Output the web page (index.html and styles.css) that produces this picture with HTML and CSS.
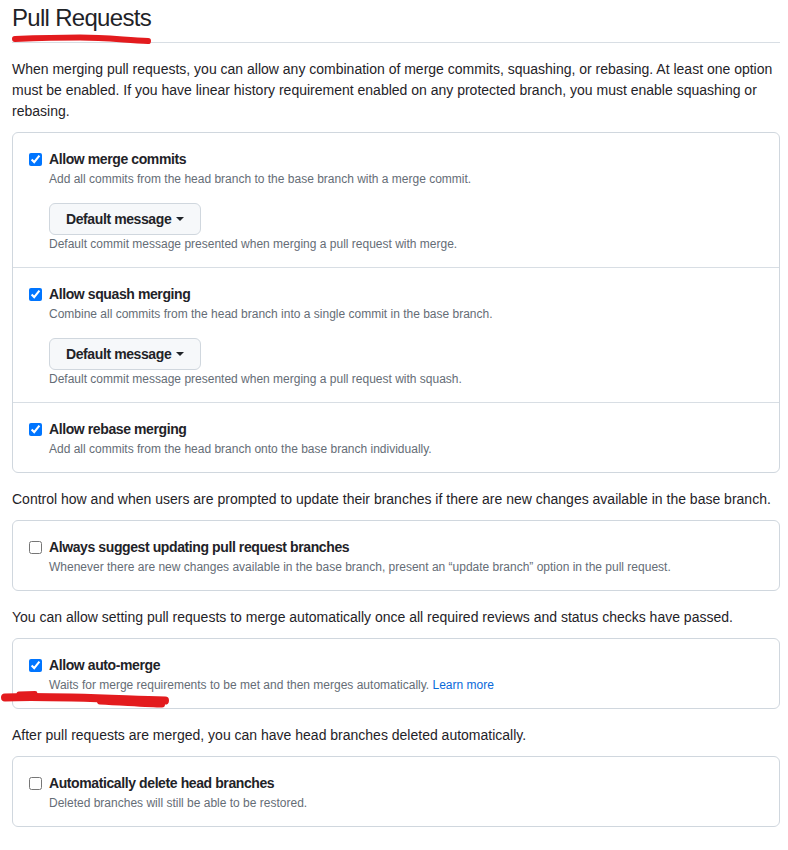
FILE: index.html
```html
<!DOCTYPE html>
<html lang="en">
<head>
<meta charset="utf-8">
<title>Pull Requests</title>
<link rel="stylesheet" href="styles.css">
</head>
<body>
<div class="page">
  <div class="subhead"><h2 class="subhead-title">Pull Requests</h2></div>
  <p class="lead">When merging pull requests, you can allow any combination of merge commits, squashing, or rebasing. At least one option must be enabled. If you have linear history requirement enabled on any protected branch, you must enable squashing or rebasing.</p>

  <div class="box">
    <div class="row">
      <label class="check"><input type="checkbox" checked><span>Allow merge commits</span></label>
      <p class="note">Add all commits from the head branch to the base branch with a merge commit.</p>
      <button class="btn" type="button">Default message<span class="caret"></span></button>
      <p class="note">Default commit message presented when merging a pull request with merge.</p>
    </div>
    <div class="row">
      <label class="check"><input type="checkbox" checked><span>Allow squash merging</span></label>
      <p class="note">Combine all commits from the head branch into a single commit in the base branch.</p>
      <button class="btn" type="button">Default message<span class="caret"></span></button>
      <p class="note">Default commit message presented when merging a pull request with squash.</p>
    </div>
    <div class="row">
      <label class="check"><input type="checkbox" checked><span>Allow rebase merging</span></label>
      <p class="note">Add all commits from the head branch onto the base branch individually.</p>
    </div>
  </div>

  <p class="text">Control how and when users are prompted to update their branches if there are new changes available in the base branch.</p>
  <div class="box">
    <div class="row">
      <label class="check"><input type="checkbox"><span>Always suggest updating pull request branches</span></label>
      <p class="note">Whenever there are new changes available in the base branch, present an “update branch” option in the pull request.</p>
    </div>
  </div>

  <p class="text">You can allow setting pull requests to merge automatically once all required reviews and status checks have passed.</p>
  <div class="box">
    <div class="row">
      <label class="check"><input type="checkbox" checked><span>Allow auto-merge</span></label>
      <p class="note">Waits for merge requirements to be met and then merges automatically. <a href="#" class="link">Learn more</a></p>
    </div>
  </div>

  <p class="text">After pull requests are merged, you can have head branches deleted automatically.</p>
  <div class="box">
    <div class="row">
      <label class="check"><input type="checkbox"><span>Automatically delete head branches</span></label>
      <p class="note">Deleted branches will still be able to be restored.</p>
    </div>
  </div>

  <svg class="scribble scribble-top" width="160" height="20" viewBox="0 30 160 20" aria-hidden="true">
    <path d="M15 39 C 40 38, 60 37.5, 80 37.5 C 105 37.5, 125 40, 148 41" fill="none" stroke="#e31b1e" stroke-width="6" stroke-linecap="round"/>
  </svg>
  <svg class="scribble scribble-bottom" width="180" height="30" viewBox="0 685 180 30" aria-hidden="true">
    <path d="M5 697.5 C 40 695.5, 90 698, 165 700.5" fill="none" stroke="#e31b1e" stroke-width="8" stroke-linecap="round"/>
    <path d="M19 694 L 35 693.5" fill="none" stroke="#e31b1e" stroke-width="5" stroke-linecap="round"/>
    <path d="M100 701.5 C 130 703, 150 704.5, 162 704.5" fill="none" stroke="#e31b1e" stroke-width="6" stroke-linecap="round"/>
  </svg>
</div>
</body>
</html>
```

FILE: styles.css
```css
* { box-sizing: border-box; }

html, body {
  margin: 0;
  padding: 0;
  background: #ffffff;
}

body {
  font-family: "Liberation Sans", Arial, sans-serif;
  font-size: 14px;
  line-height: 1.5;
  color: #1f2328;
}

.page {
  position: relative;
  padding: 0 8px 0 12px;
}

.subhead {
  border-bottom: 1px solid #d8dee4;
  padding-bottom: 6px;
  margin-bottom: 16px;
}

.subhead-title {
  margin: 0;
  font-size: 24px;
  font-weight: 400;
  line-height: 36px;
  letter-spacing: -0.7px;
}

.lead,
.text {
  margin: 0 0 10px;
}

.text {
  margin-top: 16px;
}

.box {
  border: 1px solid #d0d7de;
  border-radius: 6px;
}

.row {
  padding: 16px 16px 14px;
}

.row + .row {
  border-top: 1px solid #d8dee4;
}

.check {
  display: flex;
  align-items: center;
  font-weight: 600;
  line-height: 21px;
  letter-spacing: -0.4px;
}

.check input {
  width: 13px;
  height: 13px;
  margin: 0 7px 0 0;
  flex: none;
}

.note {
  margin: 0 0 0 20px;
  font-size: 12px;
  line-height: 18px;
  color: #656d76;
}

.link {
  color: #0969da;
  text-decoration: none;
}

.btn {
  display: flex;
  align-items: center;
  margin: 15px 0 0 20px;
  height: 32px;
  padding: 0 16px;
  font-family: inherit;
  font-size: 14px;
  font-weight: 600;
  letter-spacing: -0.4px;
  color: #1f2328;
  background: #f6f8fa;
  border: 1px solid #d0d7de;
  border-radius: 6px;
}

.caret {
  display: inline-block;
  width: 0;
  height: 0;
  margin-left: 5px;
  border-top: 4px solid #1f2328;
  border-left: 4px solid transparent;
  border-right: 4px solid transparent;
}

.scribble {
  position: absolute;
  left: 0;
  pointer-events: none;
}

.scribble-top { top: 30px; }
.scribble-bottom { top: 685px; }
```
